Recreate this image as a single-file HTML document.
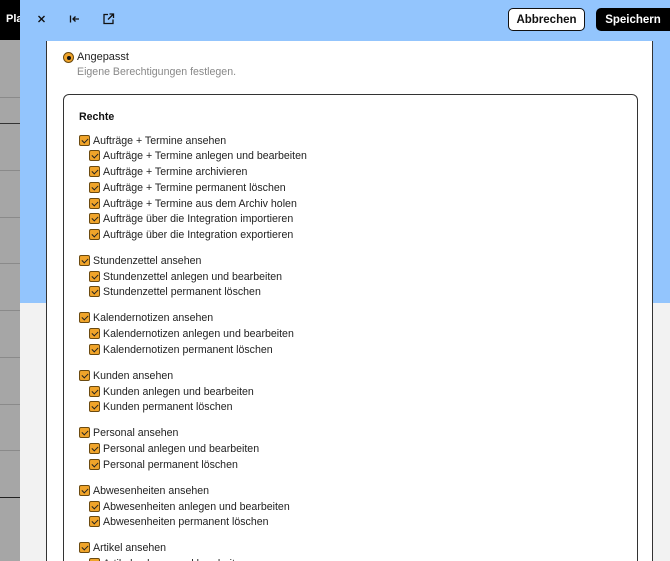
<!DOCTYPE html>
<html><head><meta charset="utf-8"><style>
*{margin:0;padding:0;box-sizing:border-box}
html,body{width:670px;height:561px;overflow:hidden}
body{position:relative;font-family:"Liberation Sans",Arial,sans-serif;background:#f2f2f2}
.left{position:absolute;left:0;top:0;width:20px;height:561px;background:#a6a6a6}
.left .top{height:40px;background:#000;color:#fff;font-size:11px;padding:13px 0 0 6px;overflow:hidden;white-space:nowrap;font-weight:bold}
.hl{position:absolute;left:0;width:20px;height:1px;background:#8a8a8a}
.blue{position:absolute;left:20px;top:0;width:650px;height:303px;background:#93c5fd}
.icon{position:absolute;top:12px}
.btn{position:absolute;top:8px;height:23px;border-radius:5px;font-size:11.5px;font-weight:bold;display:flex;align-items:center;justify-content:center}
.panel{position:absolute;left:46px;top:41px;width:607px;height:520px;background:#fff;border-left:1.5px solid #333;border-right:1.5px solid #333;overflow:hidden}
.inner{position:absolute;left:16px;top:53px;width:575px;height:500px;border:1.5px solid #333;border-radius:6px}
#rows{position:absolute;left:0;top:0;width:670px;height:561px;overflow:hidden}
.row{position:absolute;font-size:10.6px;color:#222;white-space:nowrap;height:14px;line-height:14px}
.cb{position:absolute;left:0;top:1px;width:11px;height:11px;background:#f0a42a;border:1px solid #6b4a10;border-radius:2px}
.cb::after{content:"";position:absolute;left:3px;top:1px;width:3px;height:5px;border:solid #222;border-width:0 1.5px 1.5px 0;transform:rotate(45deg)}
.row span{position:absolute;left:14px;top:0}
</style></head><body>
<div class="left"><div class="top">Pla</div></div>
<div class="hl" style="top:97px"></div><div class="hl" style="top:123px;background:#333"></div><div class="hl" style="top:170px"></div><div class="hl" style="top:217px"></div><div class="hl" style="top:263px"></div><div class="hl" style="top:310px"></div><div class="hl" style="top:357px"></div><div class="hl" style="top:404px"></div><div class="hl" style="top:450px"></div><div class="hl" style="top:497px;background:#222"></div>
<div class="blue"></div>
<svg class="icon" style="left:36px" width="12" height="14" viewBox="0 0 12 14"><path d="M2.5 4L8.5 10M8.5 4L2.5 10" stroke="#111" stroke-width="1.4"/></svg>
<svg class="icon" style="left:69px" width="12" height="14" viewBox="0 0 12 14"><path d="M1.5 3.5V10.5M10 7H4M6.5 4.5L4 7L6.5 9.5" stroke="#111" stroke-width="1.3" fill="none"/></svg>
<svg class="icon" style="left:102px" width="13" height="14" viewBox="0 0 13 14"><path d="M6 2.5H2V11.5H11V7.5M7.5 2H11.5V6M11.5 2L6 7.5" stroke="#111" stroke-width="1.3" fill="none"/></svg>
<div class="btn" style="left:508px;width:77px;background:#fff;border:1.5px solid #111;color:#111">Abbrechen</div>
<div class="btn" style="left:596px;width:74px;background:#000;color:#fff;border-radius:5px 0 0 5px">Speichern</div>
<div class="panel">
<div style="position:absolute;left:16px;top:11px;width:11px;height:11px;border-radius:50%;background:#f0a42a;border:1px solid #6b4a10"><div style="position:absolute;left:2.5px;top:2.5px;width:4px;height:4px;border-radius:50%;background:#111"></div></div>
<div style="position:absolute;left:30px;top:10px;font-size:11px;color:#222">Angepasst</div>
<div style="position:absolute;left:30px;top:25px;font-size:10.6px;color:#888">Eigene Berechtigungen festlegen.</div>
<div class="inner">
<div style="position:absolute;left:15px;top:16px;font-size:10.6px;font-weight:bold;color:#111">Rechte</div>
</div>
</div>
<div id="rows"></div>
<script>
var g=[["Aufträge + Termine ansehen",["Aufträge + Termine anlegen und bearbeiten","Aufträge + Termine archivieren","Aufträge + Termine permanent löschen","Aufträge + Termine aus dem Archiv holen","Aufträge über die Integration importieren","Aufträge über die Integration exportieren"]],
["Stundenzettel ansehen",["Stundenzettel anlegen und bearbeiten","Stundenzettel permanent löschen"]],
["Kalendernotizen ansehen",["Kalendernotizen anlegen und bearbeiten","Kalendernotizen permanent löschen"]],
["Kunden ansehen",["Kunden anlegen und bearbeiten","Kunden permanent löschen"]],
["Personal ansehen",["Personal anlegen und bearbeiten","Personal permanent löschen"]],
["Abwesenheiten ansehen",["Abwesenheiten anlegen und bearbeiten","Abwesenheiten permanent löschen"]],
["Artikel ansehen",["Artikel anlegen und bearbeiten"]]];
var y=133.5,h="";
g.forEach(function(a){h+='<div class="row" style="left:79px;top:'+y+'px"><div class="cb"></div><span>'+a[0]+'</span></div>';y+=15.75;
a[1].forEach(function(s){h+='<div class="row" style="left:89px;top:'+y+'px"><div class="cb"></div><span>'+s+'</span></div>';y+=15.75;});y+=10.2;});
document.getElementById('rows').innerHTML=h;
</script>
</body></html>
